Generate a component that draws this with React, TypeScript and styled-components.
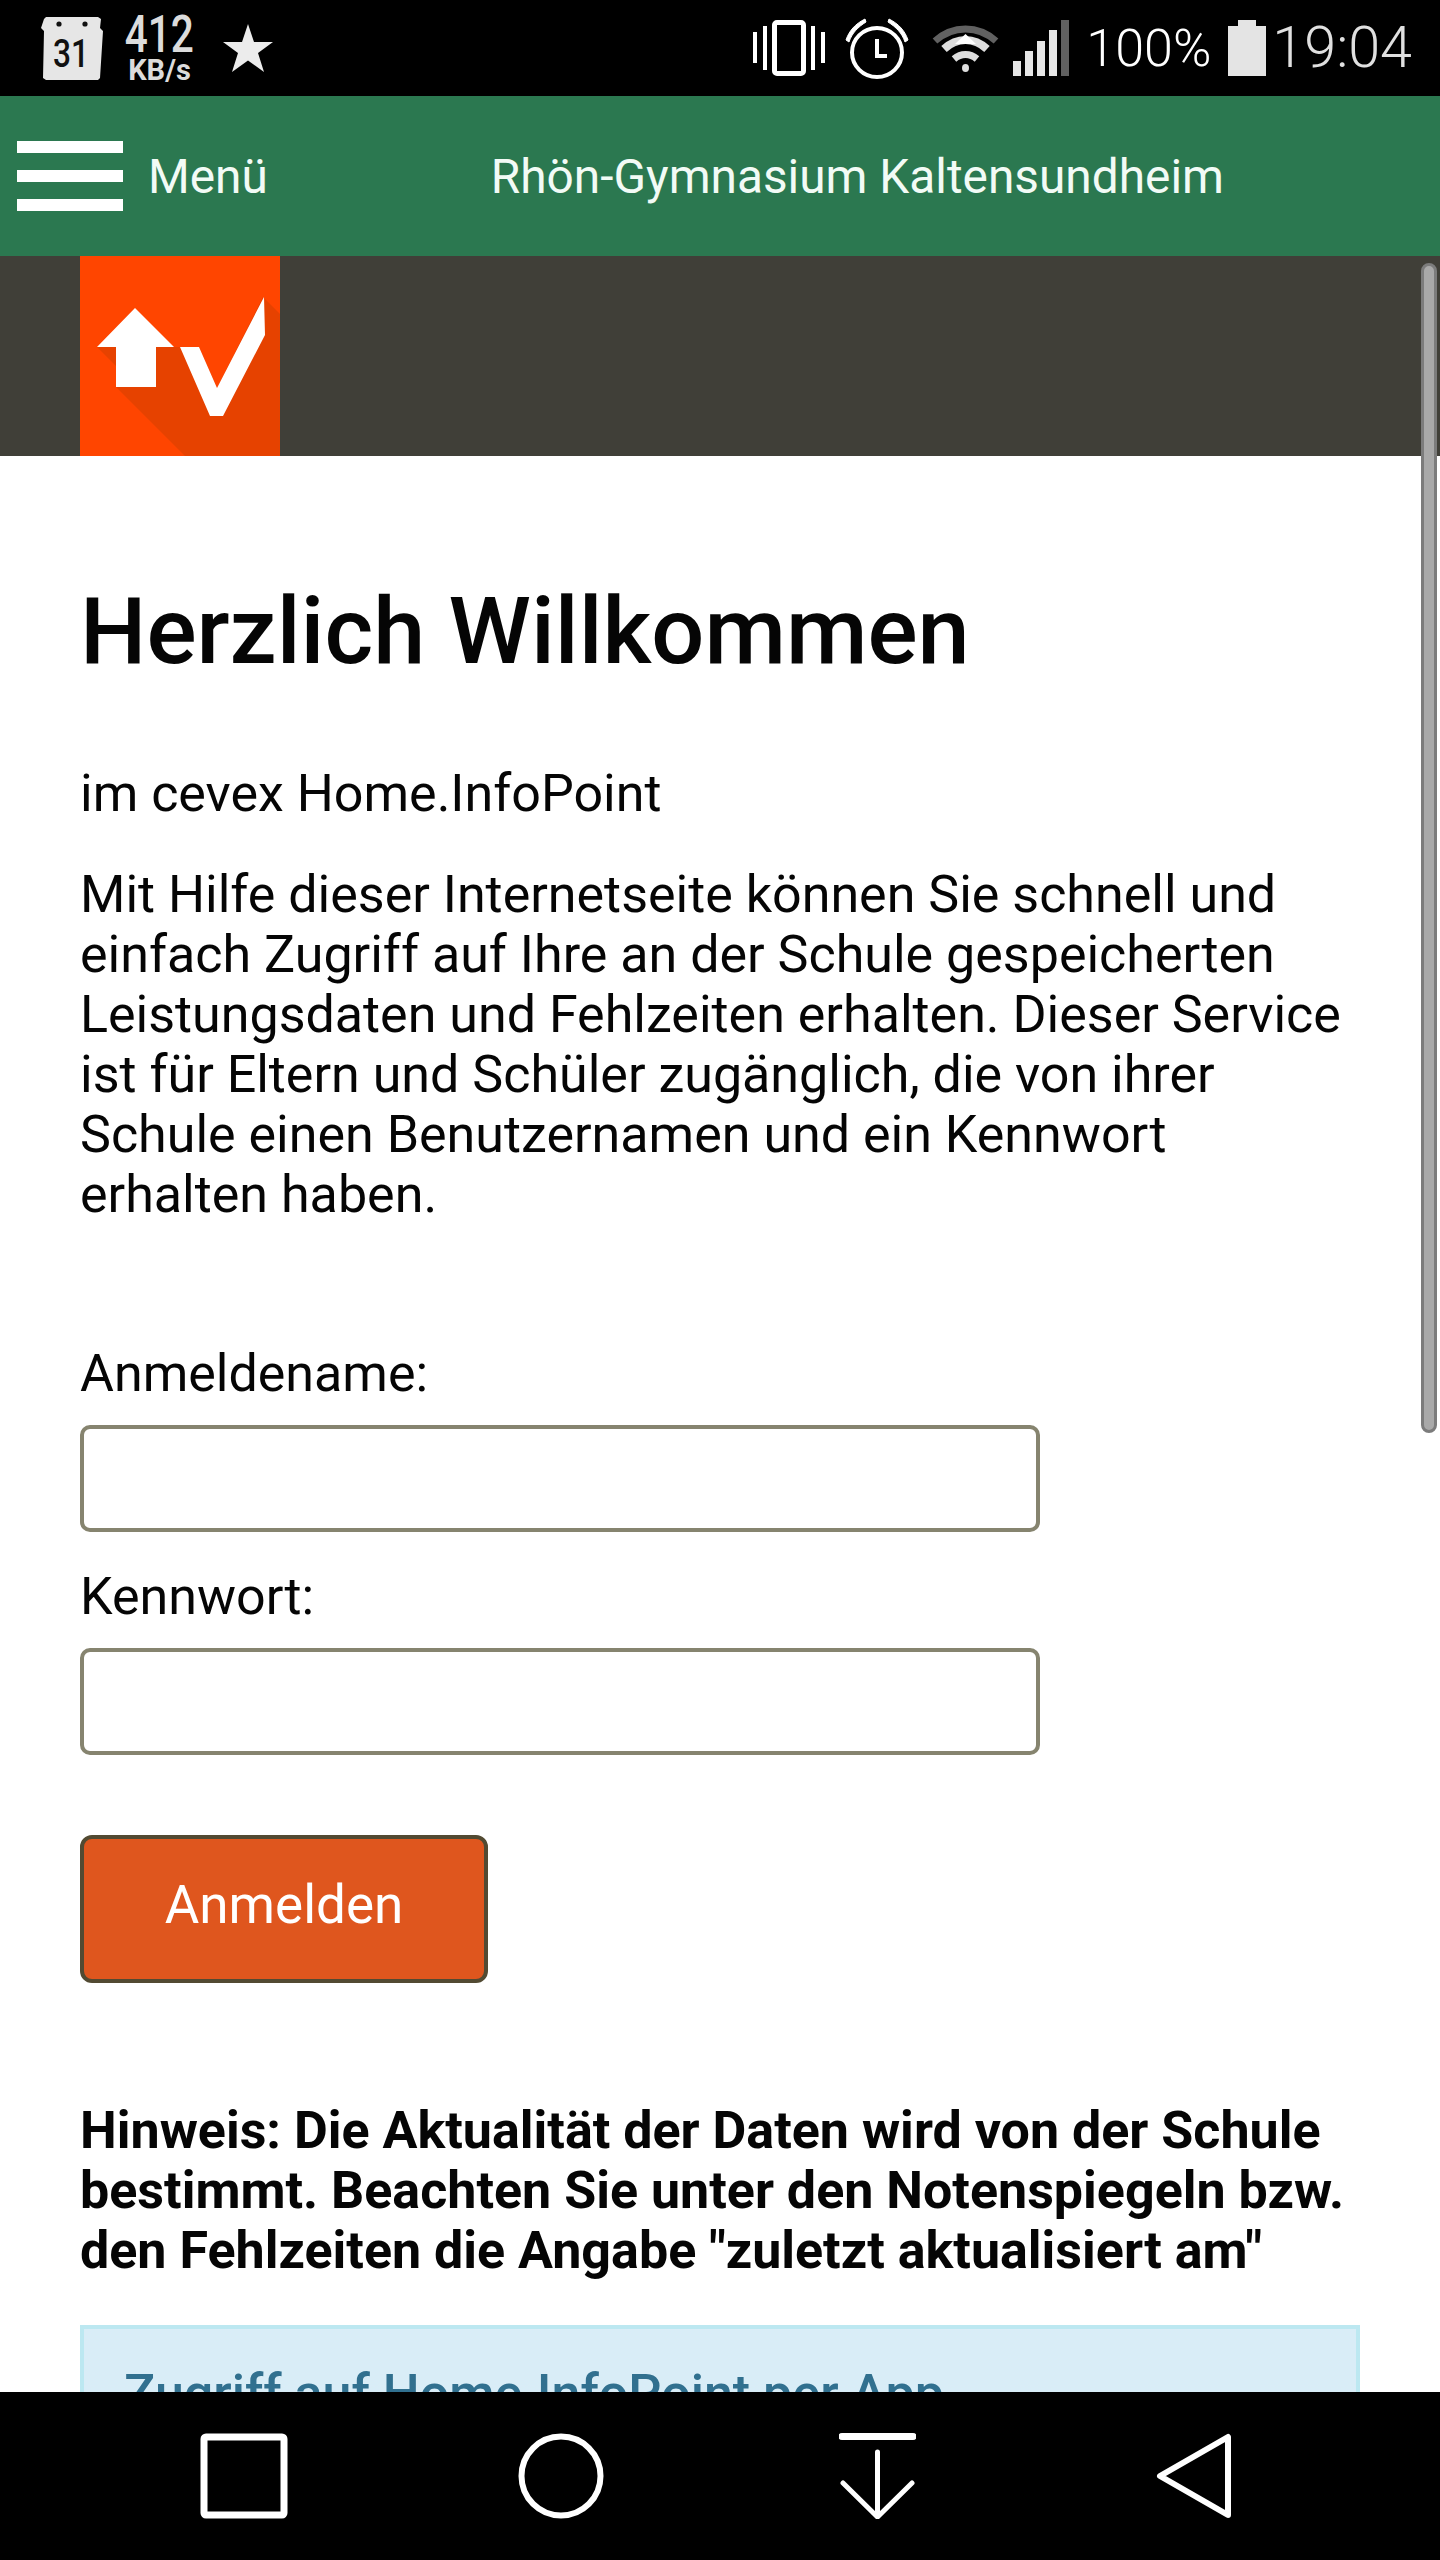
import React from "react";
import styled, { createGlobalStyle } from "styled-components";

const GlobalStyle = createGlobalStyle`
  html, body {
    margin: 0;
    padding: 0;
    background: #000;
  }
  * {
    box-sizing: border-box;
  }
`;

const App: React.FC = () => {
  return (
    <Phone>
      <GlobalStyle />
      {/* Android status bar */}
      <StatusBar>
        <StatusGroup>
          <StatusSlot $before={41}>
            <CalendarIcon />
          </StatusSlot>
          <Speed $before={23}>
            <SpeedValue>412</SpeedValue>
            <SpeedUnit>KB/s</SpeedUnit>
          </Speed>
          <StatusSlot $before={30}>
            <StarIcon />
          </StatusSlot>
        </StatusGroup>
        <StatusGroup>
          <StatusSlot $before={0}>
            <VibrateIcon />
          </StatusSlot>
          <StatusSlot $before={20}>
            <AlarmIcon />
          </StatusSlot>
          <StatusSlot $before={23}>
            <WifiIcon />
          </StatusSlot>
          <StatusSlot $before={14}>
            <SignalIcon />
          </StatusSlot>
          <BatteryText>100%</BatteryText>
          <StatusSlot $before={17}>
            <BatteryIcon />
          </StatusSlot>
          <Clock>19:04</Clock>
        </StatusGroup>
      </StatusBar>

      {/* Navbar */}
      <NavBar>
        <Burger>
          <BurgerLine />
          <BurgerLine />
          <BurgerLine />
        </Burger>
        <MenuLabel>Menü</MenuLabel>
        <SchoolName>Rhön-Gymnasium Kaltensundheim</SchoolName>
      </NavBar>

      <Banner>
        <Logo />
      </Banner>

      {/* Page */}
      <Main>
        <Title>Herzlich Willkommen</Title>
        <Lead>im cevex Home.InfoPoint</Lead>
        <Intro>
          Mit Hilfe dieser Internetseite können Sie schnell und
          <br />
          einfach Zugriff auf Ihre an der Schule gespeicherten
          <br />
          Leistungsdaten und Fehlzeiten erhalten. Dieser Service
          <br />
          ist für Eltern und Schüler zugänglich, die von ihrer
          <br />
          Schule einen Benutzernamen und ein Kennwort
          <br />
          erhalten haben.
        </Intro>
        <LoginForm>
          <FieldLabel htmlFor="user">Anmeldename:</FieldLabel>
          <Field id="user" type="text" />
          <FieldLabel htmlFor="pass">Kennwort:</FieldLabel>
          <Field id="pass" type="password" />
          <SubmitButton type="button">Anmelden</SubmitButton>
        </LoginForm>
        <Notice>
          Hinweis: Die Aktualität der Daten wird von der Schule
          <br />
          bestimmt. Beachten Sie unter den Notenspiegeln bzw.
          <br />
          den Fehlzeiten die Angabe "zuletzt aktualisiert am"
        </Notice>
        <InfoBox>
          <InfoLink>Zugriff auf Home.InfoPoint per App</InfoLink>
        </InfoBox>
      </Main>

      <SoftKeys>
        <SoftKey>
          <svg width="88" height="86" viewBox="0 0 88 86">
            <rect x="4" y="4" width="80" height="78" rx="2" fill="none" stroke="#fff" strokeWidth="7" />
          </svg>
        </SoftKey>
        <SoftKey>
          <svg width="86" height="86" viewBox="0 0 86 86">
            <circle cx="43" cy="43" r="39.500" fill="none" stroke="#fff" strokeWidth="6" />
          </svg>
        </SoftKey>
        <SoftKey>
          <svg width="77" height="86" viewBox="0 0 77 86">
            <path d="M3 3.500H74" fill="none" stroke="#fff" strokeWidth="7" strokeLinecap="round" />
            <path d="M38.500 19V82M4 50L38.500 84L73 50" fill="none" stroke="#fff" strokeWidth="5" strokeLinecap="round" strokeLinejoin="round" />
          </svg>
        </SoftKey>
        <SoftKey>
          <svg width="78" height="86" viewBox="0 0 78 86">
            <path d="M72 4V82L4 43Z" fill="none" stroke="#fff" strokeWidth="6" strokeLinejoin="round" />
          </svg>
        </SoftKey>
      </SoftKeys>

      <ScrollThumb />
    </Phone>
  );
};

export default App;

const CalendarIcon = () => (
  <svg width="62" height="64" viewBox="0 0 62 64" style={{ display: "block" }}>
    <path d="M5 1H57L60 3L59 12L62 15L59 62L57 64H5L2 62L3 15L0 12L3 3Z" fill="#e6e6e6" />
    <circle cx="18" cy="8" r="2.600" fill="#111" />
    <circle cx="44" cy="8" r="2.600" fill="#111" />
    <CalendarDay x="12" y="51" textLength="36" lengthAdjust="spacingAndGlyphs">
      31
    </CalendarDay>
  </svg>
);

const StarIcon = () => (
  <svg width="50" height="48" viewBox="0 0 50 48" style={{ display: "block" }}>
    <path d="M25 0L31 18H50L35 29L41 48L25 36.500L9 48L15 29L0 18H19Z" fill="#ececec" />
  </svg>
);

const VibrateIcon = () => (
  <svg width="72" height="56" viewBox="0 0 72 56" style={{ display: "block" }}>
    <rect x="21.500" y="2.500" width="29" height="51" rx="2.500" fill="none" stroke="#fff" strokeWidth="5" />
    <path d="M0 12H4V43H0ZM10 6H14V50H10ZM58 6H62V50H58ZM68 12H72V43H68Z" fill="#fff" />
  </svg>
);

const AlarmIcon = () => (
  <svg width="64" height="61" viewBox="0 0 64 61" style={{ display: "block" }}>
    <ellipse cx="32" cy="34.500" rx="25" ry="24.500" fill="none" stroke="#fff" strokeWidth="4" />
    <path d="M32 21V38H42" fill="none" stroke="#fff" strokeWidth="4" />
    <path d="M1 22C4 13 10 6 20 1L21 4C13 9 7 15 4 24ZM63 22C60 13 54 6 44 1L43 4C51 9 57 15 60 24Z" fill="#fff" stroke="#fff" />
  </svg>
);

const WifiIcon = () => (
  <svg width="67" height="48" viewBox="0 0 67 48" style={{ display: "block" }}>
    <path d="M3 17C21 1 46 1 64 17" fill="none" stroke="#616161" strokeWidth="7" />
    <path d="M12 25C25 13 42 13 55 25" fill="none" stroke="#dedede" strokeWidth="8" />
    <path d="M22 35C29 29 38 29 45 35" fill="none" stroke="#dedede" strokeWidth="7" />
    <path d="M33.500 10L44 20H23Z" fill="#fff" />
    <ellipse cx="33.500" cy="44" rx="3.500" ry="4" fill="#dedede" />
  </svg>
);

const SignalIcon = () => (
  <svg width="56" height="56" viewBox="0 0 56 56" style={{ display: "block" }}>
    <path d="M0 41H8V56H0ZM12 31H20V56H12ZM24 21H32V56H24ZM36 10H44V56H36Z" fill="#e6e6e6" />
    <rect x="48" y="0" width="8" height="56" fill="#616161" />
  </svg>
);

const BatteryIcon = () => (
  <svg width="38" height="56" viewBox="0 0 38 56" style={{ display: "block" }}>
    <path d="M10 0H28V6H38V56H0V6H10Z" fill="#e4e4e4" />
  </svg>
);

const Logo = () => (
  <svg width="200" height="200" viewBox="0 0 200 200" style={{ display: "block" }}>
    <rect width="200" height="200" fill="#ff4500" />
    <path d="M17 91L36 110V131L105 200H200V58L183 41L137 132L119 91H94Z" fill="#e64200" />
    <path d="M55 52L94 91H76V131H36V91H17Z" fill="#fff" />
    <path d="M100 91H119L137 132L184 41L185 79L143 160H130Z" fill="#fff" />
  </svg>
);

const Phone = styled.div`
  position: relative;
  display: flex;
  flex-direction: column;
  width: 1440px;
  height: 2560px;
  overflow: hidden;
  background: #fff;
  color: #050505;
  font-family: Roboto, "Liberation Sans", sans-serif;
`;

const StatusBar = styled.header`
  display: flex;
  flex: none;
  align-items: center;
  justify-content: space-between;
  height: 96px;
  padding-right: 28px;
  background: #000;
`;

const StatusGroup = styled.div`
  display: flex;
  align-items: center;
`;

const StatusSlot = styled.div<{ $before: number }>`
  margin-left: ${({ $before }) => $before}px;
`;

const CalendarDay = styled.text`
  font-family: Roboto, sans-serif;
  font-size: 39px;
  font-weight: 500;
  fill: #111;
`;

const Speed = styled(StatusSlot)`
  display: flex;
  flex-direction: column;
  align-items: center;
  gap: 7px;
  width: 67px;
  color: #dcdcdc;
  font-weight: 700;
`;

const SpeedValue = styled.span`
  font-size: 52px;
  font-weight: 500;
  line-height: 37px;
  transform: scaleX(0.78);
`;

const SpeedUnit = styled.span`
  font-size: 29px;
  line-height: 20px;
`;

const BatteryText = styled.span`
  margin: 2px 0 0 17px;
  color: #fff;
  font-size: 52px;
  font-weight: 300;
  line-height: 60px;
`;

const Clock = styled.span`
  margin-left: 6px;
  color: #e0e0e0;
  font-size: 57.500px;
  font-weight: 300;
  line-height: 60px;
`;

const NavBar = styled.nav`
  display: flex;
  flex: none;
  align-items: center;
  height: 160px;
  padding-left: 17px;
  background: #2b7850;
  color: #fff;
  font-size: 47.800px;
`;

const Burger = styled.div`
  display: flex;
  flex-direction: column;
  gap: 17px;
  width: 106px;
`;

const BurgerLine = styled.span`
  display: block;
  height: 12px;
  background: #fff;
`;

const MenuLabel = styled.span`
  margin-left: 25px;
  padding-top: 2px;
  color: #f2fbf6;
`;

const SchoolName = styled.span`
  margin-left: 223px;
  padding-top: 2px;
  color: #f2fbf6;
`;

const Banner = styled.div`
  flex: none;
  height: 200px;
  padding-left: 80px;
  background: #403f38;
`;

const Main = styled.main`
  flex: 1;
  min-height: 0;
  overflow: hidden;
  padding: 0 80px;
  font-size: 52px;
  line-height: 60px;
`;

const Title = styled.h1`
  margin: 115px 0 0;
  font-size: 93.600px;
  font-weight: 500;
  line-height: 120px;
`;

const Lead = styled.p`
  margin: 73px 0 0;
`;

const Intro = styled.p`
  margin: 41px 0 0;
`;

const LoginForm = styled.form`
  display: flex;
  flex-direction: column;
  align-items: flex-start;
  margin-top: 119px;
`;

const FieldLabel = styled.label`
  display: block;
`;

const Field = styled.input`
  display: block;
  width: 960px;
  height: 107px;
  margin: 21px 0 35px;
  border: 4px solid #86846f;
  border-radius: 10px;
  background: #fff;
`;

const SubmitButton = styled.button`
  width: 408px;
  height: 148px;
  margin-top: 45px;
  padding: 0 0 8px;
  border: 4px solid #524a32;
  border-radius: 12px;
  background: #df561e;
  color: #fff;
  font-family: inherit;
  font-size: 53px;
`;

const Notice = styled.p`
  margin: 118px 0 0;
  font-weight: 700;
`;

const InfoBox = styled.aside`
  margin-top: 44px;
  padding: 35px 40px;
  border: 4px solid #bce8f1;
  background: #d9edf7;
  color: #31708f;
`;

const InfoLink = styled.span`
  font-weight: 500;
`;

const SoftKeys = styled.footer`
  display: grid;
  flex: none;
  grid-template-columns: repeat(4, 317px);
  align-items: center;
  justify-items: center;
  height: 168px;
  padding: 0 85px;
  background: #000;
`;

const SoftKey = styled.div`
  display: flex;
`;

const ScrollThumb = styled.div`
  position: absolute;
  top: 263px;
  right: 3px;
  width: 16px;
  height: 1170px;
  border: 3px solid #7c7c7c;
  border-radius: 8px;
  background: #a9a9a9;
`;
